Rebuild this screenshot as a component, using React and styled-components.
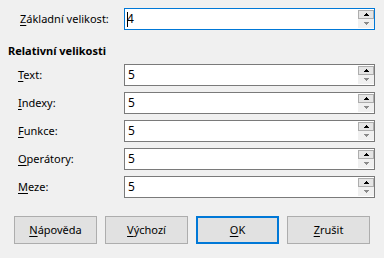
import React from "react";
import styled, { createGlobalStyle } from "styled-components";

const Global = createGlobalStyle`
  html, body { margin: 0; padding: 0; background: #f0f0f0; }
  body { font-family: "Noto Sans", "Open Sans", sans-serif; font-size: 11px; color: #000; }
`;

const Dialog = styled.div`
  width: 384px;
  height: 258px;
  box-sizing: border-box;
  background: #f0f0f0;
  padding: 8px 9px 0 0;
  display: flex;
  flex-direction: column;
`;

const Row = styled.div`
  display: grid;
  grid-template-columns: ${(p) => 124 - p.$indent}px 1fr;
  padding-left: ${(p) => p.$indent}px;
  align-items: center;
  height: 22px;
`;

const Label = styled.label`
  white-space: nowrap;
  line-height: 16px;
`;

const Heading = styled.div`
  font-weight: bold;
  padding-left: 8px;
  margin-top: 13px;
  margin-bottom: 5px;
  line-height: 16px;
`;

const Rows = styled.div`
  display: flex;
  flex-direction: column;
  gap: 6px;
`;

const Field = styled.div`
  display: flex;
  height: 22px;
  box-sizing: border-box;
  border: 1px solid ${(p) => (p.$focus ? "#0078d7" : "#7a7a7a")};
  background: #fff;
`;

const Value = styled.div`
  flex: 1;
  padding-left: ${(p) => (p.$focus ? 2 : 3)}px;
  line-height: 20px;
  font-size: 12px;
  display: flex;
  align-items: center;
`;

const Caret = styled.span`
  display: inline-block;
  width: 1px;
  height: 15px;
  background: #000;
  margin-right: -1px;
`;

const Spin = styled.div`
  width: 16px;
  display: flex;
  flex-direction: column;
  padding: 1px 0;
`;

const SpinBtn = styled.div`
  flex: 1;
  box-sizing: border-box;
  display: flex;
  align-items: center;
  justify-content: center;
  background: ${(p) => (p.$up ? "#e5e5e5" : "#f0f0f0")};
  border: 1px solid ${(p) => (p.$up ? "#adadad" : "#f0f0f0")};
`;

const DownArrow = styled.div`
  width: 7px;
  display: flex;
  flex-direction: column;
  align-items: center;
`;

const Bar = styled.div`
  width: 5px;
  height: 1px;
  background: #8a8a8a;
  &:nth-child(2) { width: 3px; }
  &:nth-child(3) { width: 1px; }
`;

const UpArrow = styled.div`
  width: 7px;
  display: flex;
  flex-direction: column;
  align-items: center;
`;

const UpBar = styled.div`
  height: 1px;
  background: #000;
  width: ${(p) => p.$w}px;
`;

const Buttons = styled.div`
  margin-top: auto;
  margin-bottom: 14px;
  padding-left: 14px;
  display: flex;
  gap: 8px;
`;

const Button = styled.div`
  width: 83px;
  height: 28px;
  box-sizing: border-box;
  background: #e1e1e1;
  border: ${(p) => (p.$def ? "2px solid #0078d7" : "1px solid #adadad")};
  display: flex;
  align-items: center;
  justify-content: center;
  line-height: 16px;
`;

const U = styled.u`
  text-underline-offset: 2px;
`;

function Spinner({ value, focus }) {
  return (
    <Field $focus={focus}>
      <Value $focus={focus}>
        {focus && <Caret />}
        {value}
      </Value>
      <Spin>
        <SpinBtn $up>
          <UpArrow>
            <UpBar $w={1} />
            <UpBar $w={3} />
            <UpBar $w={5} />
          </UpArrow>
        </SpinBtn>
        <SpinBtn>
          <DownArrow>
            <Bar />
            <Bar />
            <Bar />
          </DownArrow>
        </SpinBtn>
      </Spin>
    </Field>
  );
}

const rel = [
  ["T", "ext:"],
  ["I", "ndexy:"],
  ["F", "unkce:"],
  ["O", "perátory:"],
  ["M", "eze:"],
];

export default function App() {
  return (
    <>
      <Global />
      <Dialog>
        <Row $indent={20}>
          <Label>
            <U>Z</U>ákladní velikost:
          </Label>
          <Spinner value="4" focus />
        </Row>
        <Heading>Relativní velikosti</Heading>
        <Rows>
          {rel.map(([k, rest]) => (
            <Row key={k + rest} $indent={18}>
              <Label>
                <U>{k}</U>
                {rest}
              </Label>
              <Spinner value="5" />
            </Row>
          ))}
        </Rows>
        <Buttons>
          <Button>
            <span>
              <U>N</U>ápověda
            </span>
          </Button>
          <Button>
            <span>
              <U>V</U>ýchozí
            </span>
          </Button>
          <Button $def>
            <span>
              <U>O</U>K
            </span>
          </Button>
          <Button>
            <span>
              <U>Z</U>rušit
            </span>
          </Button>
        </Buttons>
      </Dialog>
    </>
  );
}
